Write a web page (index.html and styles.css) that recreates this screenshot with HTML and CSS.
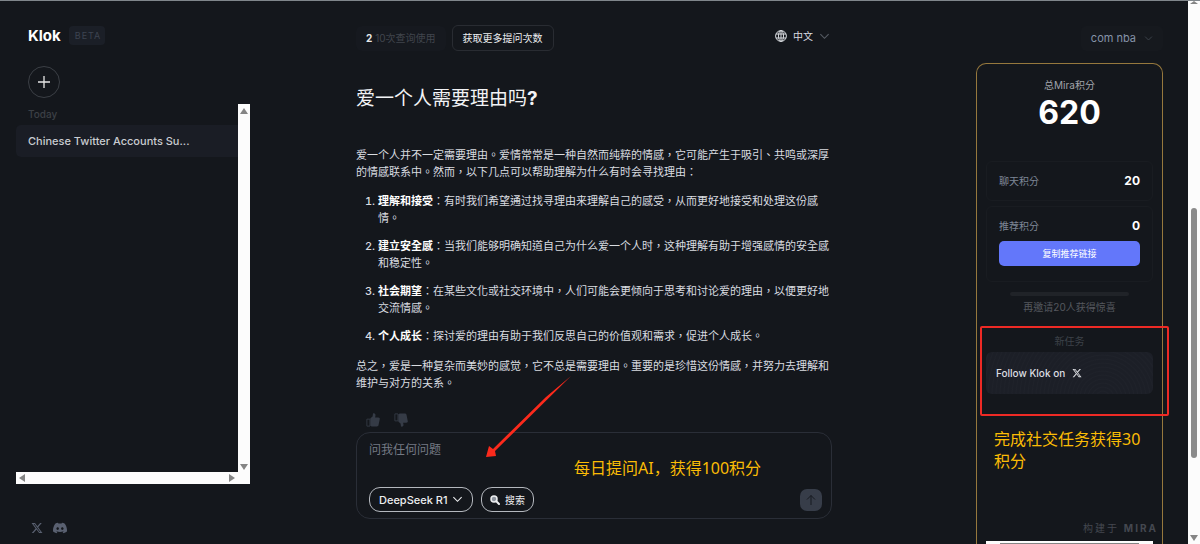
FILE: index.html
```
<!DOCTYPE html>
<html lang="zh-Hant">
<head>
    <meta charset="UTF-8">
    <meta name="viewport" content="width=device-width, initial-scale=1.0">
    <title>Klok</title>
    <link rel="stylesheet" href="styles.css">
</head>
<body>
    <svg class="defs" width="0" height="0">
        <symbol id="x-logo" viewBox="0 0 24 24"><path d="M18.2 2.2h3.4l-7.3 8.3L22.9 22h-6.7L11 15.100 4.900 22H1.500l7.800-9L1.100 2.200H8l4.700 6.300zM17 20h1.900L7 4.100H5z"/></symbol>
        <symbol id="chevron" viewBox="0 0 12 12"><path d="M1.500 3.500L6 8l4.500-4.500" fill="none" stroke="currentColor" stroke-width="1.200"/></symbol>
        <symbol id="thumb" viewBox="0 0 16 16"><path d="M1 7h3.500v8H1z" fill="none" stroke="currentColor"/><path d="M5 6l2.500-2L8 .500c2-.5 3.200.8 2.800 2.600L10.400 5H14c1.400 0 2 1 1.700 2L14.300 14c-.3.900-.9 1.300-1.700 1.300H6.500L5 14.500z"/></symbol>
    </svg>
    <div class="app">
        <div class="sidebar">
            <div class="brand">
                <span class="logo">Klok</span>
                <span class="beta">BETA</span>
            </div>
            <button class="new-chat" aria-label="New chat">
                <svg width="12" height="12" viewBox="0 0 12 12"><path d="M6 0v12M0 6h12" stroke="currentColor" stroke-width="1.300"/></svg>
            </button>
            <div class="history">
                <div class="history-list">
                    <div class="day">Today</div>
                    <a href="#" class="chat-link">Chinese Twitter Accounts Su...</a>
                </div>
                <div class="bar-v"><i class="tri up"></i><i class="tri down"></i></div>
                <div class="bar-h"><i class="tri left"></i><i class="tri right"></i></div>
            </div>
            <div class="social">
                <a href="#" aria-label="X"><svg width="12" height="12"><use href="#x-logo"/></svg></a>
                <a href="#" aria-label="Discord"><svg width="14" height="12" viewBox="0 0 24 19"><path fill-rule="evenodd" d="M20.300 2A20 20 0 0 0 15.400.500l-.6 1.300a18 18 0 0 0-5.600 0L8.600.5A20 20 0 0 0 3.700 2C.6 6.600-.3 11.100.1 15.600a20 20 0 0 0 6.100 3l1.300-2.100-2-1 .5-.4a14 14 0 0 0 12 0l.5.400-2 1 1.300 2.100a20 20 0 0 0 6.100-3C24.400 10.400 23.100 5.900 20.300 2zM8 13c-1.200 0-2.200-1.100-2.200-2.500S6.700 8 8 8s2.200 1.100 2.200 2.500S9.200 13 8 13zm8 0c-1.200 0-2.200-1.100-2.200-2.500S14.700 8 16 8s2.200 1.100 2.200 2.500S17.200 13 16 13z"/></svg></a>
            </div>
        </div>

        <main class="main">
            <div class="column">
                <div class="topbar">
                    <div class="usage"><b>2</b> 10次查询使用</div>
                    <button class="more">获取更多提问次数</button>
                    <label class="language">
                        <svg class="globe" width="12" height="12" viewBox="0 0 12 12"><circle cx="6" cy="6" r="5.400"/><ellipse cx="6" cy="6" rx="2.500" ry="5.400"/><path d="M1 4h10M1 8h10M6 .600v10.800"/></svg>
                        <select aria-label="语言"><option>中文</option></select>
                        <svg class="chev" width="11" height="11"><use href="#chevron"/></svg>
                    </label>
                </div>

                <h1>爱一个人需要理由吗<b>?</b></h1>
                <div class="answer">
                    <p>爱一个人并不一定需要理由。爱情常常是一种自然而纯粹的情感，它可能产生于吸引、共鸣或深厚的情感联系中。然而，以下几点可以帮助理解为什么有时会寻找理由：</p>
                    <ol>
                        <li><strong>理解和接受</strong>：有时我们希望通过找寻理由来理解自己的感受，从而更好地接受和处理这份感情。</li>
                        <li><strong>建立安全感</strong>：当我们能够明确知道自己为什么爱一个人时，这种理解有助于增强感情的安全感和稳定性。</li>
                        <li><strong>社会期望</strong>：在某些文化或社交环境中，人们可能会更倾向于思考和讨论爱的理由，以便更好地交流情感。</li>
                        <li><strong>个人成长</strong>：探讨爱的理由有助于我们反思自己的价值观和需求，促进个人成长。</li>
                    </ol>
                    <p>总之，爱是一种复杂而美妙的感觉，它不总是需要理由。重要的是珍惜这份情感，并努力去理解和维护与对方的关系。</p>
                </div>

                <div class="rate">
                    <button aria-label="Like"><svg width="14" height="14"><use href="#thumb"/></svg></button>
                    <button class="dislike" aria-label="Dislike"><svg width="14" height="14"><use href="#thumb"/></svg></button>
                </div>

                <form class="composer">
                    <textarea placeholder="问我任何问题" aria-label="问我任何问题"></textarea>
                    <div class="tools">
                        <label class="tool">
                            <select aria-label="Model"><option>DeepSeek R1</option></select>
                            <svg width="11" height="11"><use href="#chevron"/></svg>
                        </label>
                        <button type="button" class="tool search">
                            <svg width="10" height="10" viewBox="0 0 10 10"><circle cx="4" cy="4" r="3" fill="#8d949e" stroke="currentColor" stroke-width="1.500"/><path d="M6.300 6.300L9 9" stroke="currentColor" stroke-width="2" stroke-linecap="round"/></svg>
                            搜索
                        </button>
                        <button type="button" class="send" aria-label="Send">
                            <svg width="12" height="12" viewBox="0 0 12 12"><path d="M6 11V1.500M2 5.500l4-4 4 4" fill="none" stroke="currentColor"/></svg>
                        </button>
                    </div>
                </form>

                <svg class="arrow" width="86" height="84" viewBox="0 0 86 84"><path d="M85 1L9 76l1 5L0 82l3-11 4 3L60 22z"/></svg>
                <div class="note note-ask" lang="zh-CN">每日提问AI，获得100积分</div>
            </div>
        </main>

        <aside class="rewards">
            <button class="user">com nba <svg width="9" height="9"><use href="#chevron"/></svg></button>
            <div class="card">
                <div class="total-label">总Mira积分</div>
                <div class="total">620</div>
                <div class="box">
                    <div class="row"><span>聊天积分</span><b>20</b></div>
                </div>
                <div class="box referral">
                    <div class="row"><span>推荐积分</span><b>0</b></div>
                    <button class="copy">复制推荐链接</button>
                </div>
                <div class="progress"></div>
                <div class="hint">再邀请20人获得惊喜</div>
                <div class="task-title">新任务</div>
                <a href="#" class="task">Follow Klok on <svg width="10" height="10"><use href="#x-logo"/></svg></a>
                <div class="built">构建于 <b>MIRA</b></div>
                <div class="card-bar"></div>
                <div class="frame"></div>
                <div class="note note-task" lang="zh-CN">完成社交任务获得30积分</div>
            </div>
        </aside>

        <div class="page-bar"><i class="tri up"></i><i class="handle"></i><i class="tri down"></i></div>
    </div>
</body>
</html>
```
FILE: styles.css
```
* {
    box-sizing: border-box;
}

body {
    margin: 0;
    background-color: #14171c;
    color: #d9dce0;
    font-family: Inter, "Noto Sans CJK TC", sans-serif;
    font-size: 10px;
}

button, select, textarea {
    font: inherit;
    color: inherit;
    background: none;
    border: none;
    padding: 0;
    margin: 0;
    appearance: none;
    outline: none;
}

button, select {
    cursor: pointer;
}

a {
    color: inherit;
    text-decoration: none;
}

svg {
    display: block;
    fill: currentColor;
}

.defs {
    position: absolute;
}

.app {
    display: grid;
    grid-template-columns: 250px 1fr 249px 12px;
    height: 100vh;
    overflow: hidden;
    border-top: 1px solid #80868b;
}

/* sidebar */
.sidebar {
    display: flex;
    flex-direction: column;
    padding: 25px 0 10px 16px;
    min-height: 0;
}

.brand {
    display: flex;
    align-items: center;
    gap: 8px;
    padding-left: 12px;
}

.logo {
    font-size: 15px;
    font-weight: 700;
    line-height: 19px;
    color: #fff;
}

.beta {
    padding: 0 4px 0 6px;
    border-radius: 4px;
    background-color: #1b1f27;
    color: #3d4451;
    font-size: 9px;
    line-height: 19px;
    letter-spacing: 1px;
}

.new-chat {
    display: grid;
    place-items: center;
    width: 32px;
    height: 32px;
    margin: 21px 0 6px 12px;
    border: 1px solid #3b3f45;
    border-radius: 50%;
    color: #e6e6e6;
}

.history {
    flex: 1;
    display: grid;
    grid-template-columns: 1fr 12px;
    grid-template-rows: 1fr 12px;
}

.day {
    padding: 4px 12px;
    line-height: 13px;
    font-weight: 500;
    color: #3c4046;
}

.chat-link {
    display: block;
    padding: 0 12px;
    border-radius: 5px 0 0 5px;
    background-color: #1a1d25;
    color: #c9ccd1;
    font-size: 11px;
    font-weight: 500;
    line-height: 32px;
}

.bar-v, .bar-h, .page-bar {
    display: flex;
    justify-content: space-between;
    align-items: center;
    background-color: #fcfcfc;
}

.bar-v {
    flex-direction: column;
    padding: 4px 0 2px;
}

.bar-h {
    grid-column: span 2;
    padding: 0 15px 0 3px;
}

.tri {
    border: 4px solid transparent;
}

.up {
    border-top: none;
    border-bottom: 6px solid #858585;
}

.down {
    border-bottom: none;
    border-top: 6px solid #858585;
}

.left {
    border-left: none;
    border-right: 6px solid #858585;
}

.right {
    border-right: none;
    border-left: 6px solid #858585;
}

.social {
    display: flex;
    gap: 10px;
    padding: 38px 15px 0;
    color: #596070;
}

/* chat */
.main {
    display: flex;
    justify-content: center;
    padding-right: 1px;
}

.column {
    position: relative;
    width: 100%;
    max-width: 476px;
    padding-top: 24px;
}

.topbar {
    display: flex;
    align-items: center;
    gap: 6px;
    height: 26px;
}

.usage {
    padding: 0 10px;
    border-radius: 6px;
    background-color: #16191f;
    color: #41454d;
    line-height: 25px;
}

.usage b {
    color: #e8e8e8;
}

.more {
    padding: 0 10px;
    border: 1px solid #292c32;
    border-radius: 6px;
    line-height: 24px;
    color: #eceef0;
}

.language {
    display: flex;
    align-items: center;
    gap: 6px;
    margin: 0 2px 4px auto;
}

.globe {
    fill: none;
    stroke: currentColor;
}

.chev {
    color: #565b63;
}

h1 {
    margin: 36px 0 36px;
    font-size: 19px;
    font-weight: 400;
    line-height: 24px;
    color: #f2f3f5;
}

.answer {
    font-size: 11px;
    line-height: 17px;
}

.answer p {
    margin: 0;
}

.answer ol {
    margin: 12px 0 13px;
    padding-left: 22px;
}

.answer li + li {
    margin-top: 11px;
}

.answer li::marker {
    font-weight: 500;
}

.answer strong {
    color: #fff;
}

.rate {
    display: flex;
    gap: 14px;
    padding: 21px 10px 5px;
    color: #353b46;
}

.dislike {
    transform: rotate(180deg) scaleX(-1);
}

.composer {
    padding: 7px 9px 6px 12px;
    border: 1px solid #2a2e37;
    border-radius: 14px;
}

.composer textarea {
    display: block;
    width: 100%;
    height: 47px;
    resize: none;
    font-size: 12px;
    line-height: 20px;
}

.composer textarea::placeholder {
    color: #747a84;
}

.tools {
    display: flex;
    align-items: center;
    gap: 8px;
}

.tool {
    display: flex;
    align-items: center;
    gap: 4px;
    height: 25px;
    padding: 0 9px;
    border: 1px solid #b4b8be;
    border-radius: 11px;
    font-weight: 500;
    color: #eceef0;
}

.tool select {
    font-size: 11px;
}

.search {
    gap: 5px;
    padding: 0 8px;
    font-weight: 400;
}

.send {
    display: grid;
    place-items: center;
    width: 22px;
    height: 22px;
    margin-left: auto;
    border-radius: 7px;
    background-color: #373d49;
    color: #171a20;
}

/* rewards */
.rewards {
    display: flex;
    flex-direction: column;
    min-height: 0;
    padding: 25px 25px 0 37px;
}

.user {
    display: flex;
    align-items: center;
    align-self: flex-end;
    gap: 8px;
    padding: 0 10px;
    border-radius: 5px;
    background-color: #16191e;
    color: #8593a8;
    font-size: 11px;
    line-height: 25px;
}

.user svg {
    color: #3f454e;
}

.card {
    position: relative;
    flex: 1;
    display: flex;
    flex-direction: column;
    margin-top: 12px;
    padding: 13px 9px 0;
    border: 1px solid #96783d;
    border-bottom: none;
    border-radius: 10px 10px 0 0;
    text-align: center;
}

.total-label {
    line-height: 16px;
    color: #a0a4aa;
}

.total {
    margin-bottom: 28px;
    font-size: 32px;
    font-weight: 700;
    line-height: 40px;
    color: #fff;
}

.box {
    margin-bottom: 5px;
    padding: 10px 12px;
    border: 1px solid #191c21;
    border-radius: 6px;
}

.row {
    display: flex;
    justify-content: space-between;
    align-items: center;
    line-height: 18px;
    color: #7d8696;
}

.row b {
    font-size: 12px;
    color: #fff;
}

.copy {
    width: 100%;
    margin-top: 6px;
    border-radius: 5px;
    background-color: #6377fa;
    color: #fff;
    font-size: 9px;
    line-height: 25px;
}

.referral {
    padding-bottom: 15px;
    margin-bottom: 10px;
}

.progress {
    height: 4px;
    margin: 0 24px 2px;
    border-radius: 2px;
    background-color: #202328;
}

.hint {
    line-height: 18px;
    color: #54585e;
}

.task-title {
    margin-top: 16px;
    line-height: 18px;
    color: #3d4249;
}

.task {
    display: flex;
    align-items: center;
    gap: 7px;
    height: 42px;
    margin-top: 2px;
    padding: 0 10px;
    border-radius: 6px;
    background: repeating-radial-gradient(circle at 70% 110%, #1c1f27 0, #1c1f27 2px, #1f222a 3px, #1c1f27 4px);
    color: #dcdee2;
    font-weight: 500;
}

.built {
    margin: auto -5px 5px 0;
    text-align: right;
    line-height: 16px;
    letter-spacing: 2px;
    color: #444850;
}

.card-bar {
    height: 3px;
    border: solid #fcfcfc;
    border-width: 2px 14px 0;
    background-color: #858585;
}

.page-bar {
    flex-direction: column;
    padding: 0 0 3px;
}

.page-bar .up {
    border-bottom-width: 3px;
}

.handle {
    width: 6px;
    height: 46vh;
    margin: 204px 0 auto;
    border-radius: 3px;
    background-color: #8b8b8b;
}

/* annotations over the page */
.arrow {
    position: absolute;
    left: 130px;
    top: 374px;
    color: #fb2a1c;
}

.frame {
    position: absolute;
    left: 3px;
    top: 262px;
    width: 189px;
    height: 90px;
    border: 2px solid #ee2a25;
    border-radius: 2px;
}

.note {
    position: absolute;
    color: #fbbc05;
    font-family: "Noto Sans", "Noto Sans CJK SC", sans-serif;
    font-size: 16px;
    line-height: 22px;
    text-align: left;
}

.note-ask {
    left: 218px;
    top: 456px;
}

.note-task {
    left: 17px;
    top: 364px;
    width: 154px;
}
```
